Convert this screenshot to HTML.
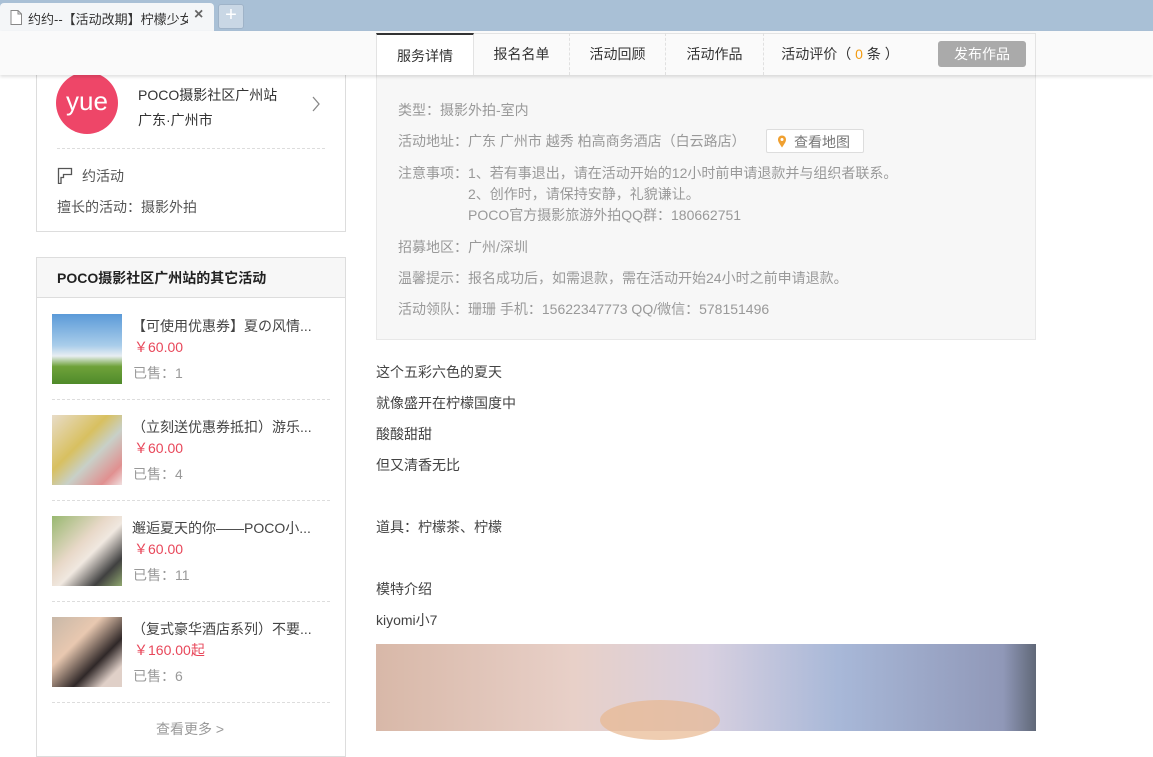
<!DOCTYPE html>
<html><head><meta charset="utf-8">
<style>
*{margin:0;padding:0;box-sizing:border-box}
body{width:1153px;height:731px;overflow:hidden;background:#fff;font-family:"Liberation Sans","Noto Sans CJK SC",sans-serif;font-size:14px;color:#555;position:relative}
.a{position:absolute;white-space:nowrap}
.tabbar{position:absolute;left:0;top:0;width:1153px;height:31px;background:#a9c0d6}
.tab{position:absolute;left:0;top:3px;width:214px;height:28px;background:#f4f6f8;border-radius:4px 4px 0 0;font-size:13px;color:#333}
.hdr{position:absolute;left:0;top:31px;width:1153px;height:44px;background:#fafafa;box-shadow:0 2px 3px rgba(0,0,0,.12);z-index:5}
.t{position:absolute;top:2px;height:42px;line-height:42px;text-align:center;color:#333;font-size:14px;border-right:1px dashed #e0e0e0}
.box{position:absolute;border:1px solid #ddd;background:#fff}
.dash{position:absolute;border-top:1px dashed #ddd}
.img{position:absolute;left:52px;width:70px;height:70px}
.ti{left:132px;color:#444}
.pr{left:134px;color:#e8475a}
.so{left:133px;color:#999}
.info{color:#999}
.ct{left:376px;color:#444}
</style></head><body>
<div class="tabbar"></div>
<div class="tab">
 <svg class="a" style="left:10px;top:7px" width="12" height="15"><path d="M1 .5h7l3.5 3.5v10.5h-10.5z M8 .5v3.5h3.5" fill="#fff" stroke="#888"/></svg>
 <span class="a" style="left:28px;top:6px;width:160px;overflow:hidden">约约--【活动改期】柠檬少女–</span>
 <span class="a" style="left:194px;top:3px;font-size:16px;color:#666;font-weight:bold">×</span>
</div>
<div class="a" style="left:218px;top:4px;width:26px;height:25px;background:#c9d7e5;border:1px solid #9fb3c8;border-radius:3px;color:#fff;font-size:20px;line-height:21px;text-align:center">+</div>

<div class="hdr">
 <div class="a" style="left:376px;top:2px;width:660px;height:42px;border:1px solid #e3e3e3;border-bottom:none;background:#fafafa"></div>
 <div class="t" style="left:376px;width:98px;background:#fff;border-top:2px solid #333;border-left:1px solid #e3e3e3;border-right:1px solid #e3e3e3">服务详情</div>
 <div class="t" style="left:474px;width:96px">报名名单</div>
 <div class="t" style="left:570px;width:96px">活动回顾</div>
 <div class="t" style="left:666px;width:98px">活动作品</div>
 <div class="t" style="left:770px;width:140px;border-right:none">活动评价（ <span style="color:#f39c12">0</span> 条 ）</div>
 <div class="a" style="left:938px;top:10px;width:88px;height:26px;background:#aaa;border-radius:3px;color:#fff;text-align:center;line-height:26px;font-size:14px">发布作品</div>
</div>

<div class="box" style="left:36px;top:40px;width:310px;height:192px"></div>
<div class="a" style="left:56px;top:72px;width:62px;height:62px;border-radius:50%;background:#ee4668;color:#fff;font-size:26px;text-align:center;line-height:58px">yue</div>
<div class="a" style="left:138px;top:85px;color:#333">POCO摄影社区广州站</div>
<div class="a" style="left:138px;top:110px;color:#333">广东·广州市</div>
<svg class="a" style="left:311px;top:96px" width="10" height="16"><path d="M2 1l6 7-6 7" fill="none" stroke="#888" stroke-width="1.3"/></svg>
<div class="dash" style="left:57px;top:148px;width:268px"></div>
<svg class="a" style="left:57px;top:167px" width="16" height="17"><path d="M1.5 16.5V1.5h13v6h-8v3h-2.5v6z" fill="none" stroke="#555" stroke-width="1.3"/></svg>
<div class="a" style="left:82px;top:166px;color:#555">约活动</div>
<div class="a" style="left:57px;top:197px;color:#555">擅长的活动：摄影外拍</div>

<div class="box" style="left:36px;top:257px;width:310px;height:500px"></div>
<div class="a" style="left:37px;top:258px;width:308px;height:40px;background:#f7f7f7;border-bottom:1px solid #ddd"></div>
<div class="a" style="left:57px;top:268px;color:#222;font-weight:bold">POCO摄影社区广州站的其它活动</div>

<div class="img" style="top:314px;background:linear-gradient(#5b9ad8 0%,#a9cdea 45%,#e8eef2 60%,#6fa23a 75%,#4f8a2a 100%)"></div>
<div class="a ti" style="top:316px">【可使用优惠券】夏の风情...</div>
<div class="a pr" style="top:337px">￥60.00</div>
<div class="a so" style="top:363px">已售：1</div>
<div class="dash" style="left:52px;top:399px;width:278px"></div>

<div class="img" style="top:415px;background:linear-gradient(135deg,#e8dcc8,#d8c060 40%,#c8d0c8 60%,#e09090 85%,#f0e0e0)"></div>
<div class="a ti" style="top:417px">（立刻送优惠券抵扣）游乐...</div>
<div class="a pr" style="top:438px">￥60.00</div>
<div class="a so" style="top:464px">已售：4</div>
<div class="dash" style="left:52px;top:500px;width:278px"></div>

<div class="img" style="top:516px;background:linear-gradient(135deg,#98b870,#e8d8c8 40%,#f0e8e0 55%,#404040 80%,#90a870)"></div>
<div class="a ti" style="top:518px">邂逅夏天的你——POCO小...</div>
<div class="a pr" style="top:539px">￥60.00</div>
<div class="a so" style="top:565px">已售：11</div>
<div class="dash" style="left:52px;top:601px;width:278px"></div>

<div class="img" style="top:617px;background:linear-gradient(135deg,#c8b8a8,#e8c8b0 35%,#302828 65%,#e0d0c8 85%)"></div>
<div class="a ti" style="top:619px">（复式豪华酒店系列）不要...</div>
<div class="a pr" style="top:640px">￥160.00起</div>
<div class="a so" style="top:666px">已售：6</div>
<div class="dash" style="left:52px;top:702px;width:278px"></div>
<div class="a" style="left:156px;top:719px;color:#999">查看更多 &gt;</div>

<div class="a" style="left:376px;top:75px;width:660px;height:265px;background:#f7f7f7;border:1px solid #e8e8e8;border-top:none"></div>
<div class="a info" style="left:398px;top:100px">类型：摄影外拍-室内</div>
<div class="a info" style="left:398px;top:131px">活动地址：广东 广州市 越秀 柏高商务酒店（白云路店）</div>
<div class="a" style="left:766px;top:129px;width:98px;height:24px;background:#fff;border:1px solid #ddd;border-radius:2px"></div>
<svg class="a" style="left:777px;top:135px" width="10" height="13"><path d="M5 12.5C2 8 1 6.5 1 4.5a4 4 0 0 1 8 0c0 2-1 3.5-4 8z" fill="#f0a030"/><circle cx="5" cy="4.5" r="1.5" fill="#fff"/></svg>
<div class="a info" style="left:794px;top:132px;color:#777">查看地图</div>
<div class="a info" style="left:398px;top:163px">注意事项：1、若有事退出，请在活动开始的12小时前申请退款并与组织者联系。</div>
<div class="a info" style="left:468px;top:184px">2、创作时，请保持安静，礼貌谦让。</div>
<div class="a info" style="left:468px;top:205px">POCO官方摄影旅游外拍QQ群：180662751</div>
<div class="a info" style="left:398px;top:237px">招募地区：广州/深圳</div>
<div class="a info" style="left:398px;top:268px">温馨提示：报名成功后，如需退款，需在活动开始24小时之前申请退款。</div>
<div class="a info" style="left:398px;top:299px">活动领队：珊珊 手机：15622347773 QQ/微信：578151496</div>

<div class="a ct" style="top:362px">这个五彩六色的夏天</div>
<div class="a ct" style="top:393px">就像盛开在柠檬国度中</div>
<div class="a ct" style="top:424px">酸酸甜甜</div>
<div class="a ct" style="top:455px">但又清香无比</div>
<div class="a ct" style="top:517px">道具：柠檬茶、柠檬</div>
<div class="a ct" style="top:579px">模特介绍</div>
<div class="a ct" style="top:610px">kiyomi小7</div>
<div class="a" style="left:376px;top:644px;width:660px;height:87px;background:linear-gradient(90deg,#d8b8a8 0%,#e8d0c8 30%,#d8d0e0 50%,#a8b8d8 70%,#9098b8 95%,#606878 100%)"></div>
<div class="a" style="left:600px;top:700px;width:120px;height:40px;border-radius:50%;background:#e8b890;opacity:.7"></div>
</body></html>
